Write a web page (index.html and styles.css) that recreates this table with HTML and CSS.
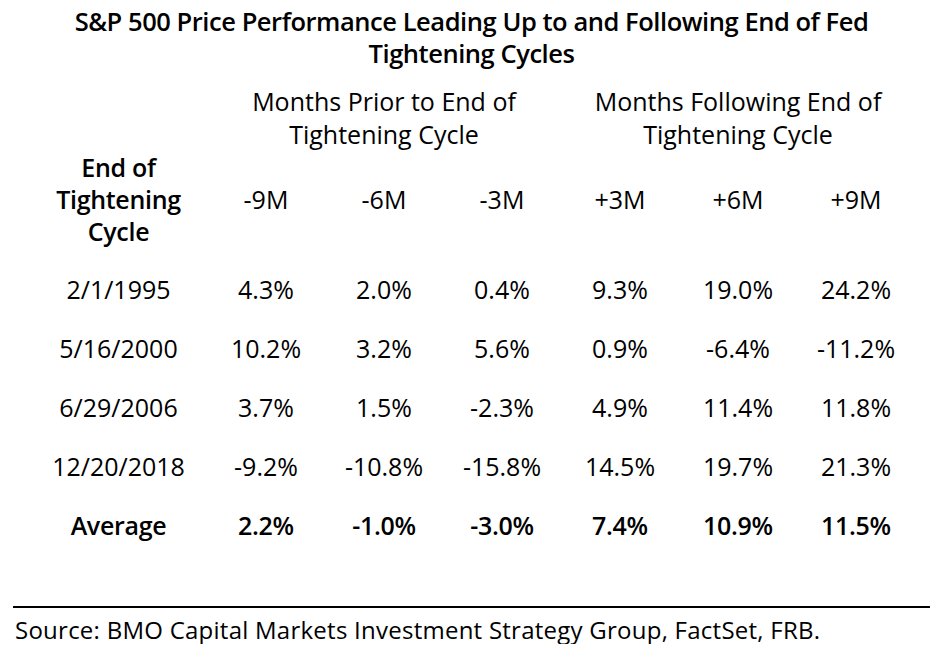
FILE: index.html
```html
<!DOCTYPE html>
<html lang="en">
<head>
<meta charset="utf-8">
<title>S&amp;P 500 Price Performance</title>
<link rel="stylesheet" href="styles.css">
</head>
<body>
<main class="page">
  <h1 class="title">S&amp;P 500 Price Performance Leading Up to and Following End of Fed Tightening Cycles</h1>
  <div class="table">
    <div class="group-row">
      <div class="spacer"></div>
      <div class="group">Months Prior to End of<br>Tightening Cycle</div>
      <div class="group">Months Following End of<br>Tightening Cycle</div>
    </div>
    <div class="row head">
      <div class="cell first strong">End of<br>Tightening<br>Cycle</div>
      <div class="cell">-9M</div>
      <div class="cell">-6M</div>
      <div class="cell">-3M</div>
      <div class="cell">+3M</div>
      <div class="cell">+6M</div>
      <div class="cell">+9M</div>
    </div>
    <div class="body">
      <div class="row data">
        <div class="cell first">2/1/1995</div>
        <div class="cell">4.3%</div><div class="cell">2.0%</div><div class="cell">0.4%</div>
        <div class="cell">9.3%</div><div class="cell">19.0%</div><div class="cell">24.2%</div>
      </div>
      <div class="row data">
        <div class="cell first">5/16/2000</div>
        <div class="cell">10.2%</div><div class="cell">3.2%</div><div class="cell">5.6%</div>
        <div class="cell">0.9%</div><div class="cell">-6.4%</div><div class="cell">-11.2%</div>
      </div>
      <div class="row data">
        <div class="cell first">6/29/2006</div>
        <div class="cell">3.7%</div><div class="cell">1.5%</div><div class="cell">-2.3%</div>
        <div class="cell">4.9%</div><div class="cell">11.4%</div><div class="cell">11.8%</div>
      </div>
      <div class="row data">
        <div class="cell first">12/20/2018</div>
        <div class="cell">-9.2%</div><div class="cell">-10.8%</div><div class="cell">-15.8%</div>
        <div class="cell">14.5%</div><div class="cell">19.7%</div><div class="cell">21.3%</div>
      </div>
      <div class="row data avg">
        <div class="cell first">Average</div>
        <div class="cell">2.2%</div><div class="cell">-1.0%</div><div class="cell">-3.0%</div>
        <div class="cell">7.4%</div><div class="cell">10.9%</div><div class="cell">11.5%</div>
      </div>
    </div>
  </div>
  <footer class="source">Source: BMO Capital Markets Investment Strategy Group, FactSet, FRB.</footer>
</main>
</body>
</html>
```

FILE: styles.css
```css
html, body {
  margin: 0;
  padding: 0;
  background: #ffffff;
}

body {
  font-family: "Open Sans", "Noto Sans", sans-serif;
  color: #000000;
}

.page {
  width: 917px;
  margin-left: 13px;
  padding-top: 5px;
}

.title {
  margin: 0 auto;
  max-width: 860px;
  font-size: 25.5px;
  line-height: 32px;
  font-weight: 600;
  letter-spacing: -0.45px;
  text-align: center;
}

.table {
  padding-left: 17px;
  margin-top: 16px;
}

.group-row {
  display: grid;
  grid-template-columns: 177px 354px 354px;
}

.group {
  font-size: 25px;
  line-height: 33px;
  text-align: center;
}

.row {
  display: grid;
  grid-template-columns: 177px repeat(6, 118px);
  align-items: center;
}

.cell {
  text-align: center;
  font-size: 25px;
  white-space: nowrap;
}

.head .cell {
  line-height: 32px;
}

.strong {
  font-weight: 600;
  letter-spacing: -0.3px;
}

.body {
  padding-top: 13px;
}

.data .cell {
  line-height: 59px;
}

.avg .cell {
  font-weight: 600;
  letter-spacing: -0.3px;
}

.source {
  margin-top: 51px;
  border-top: 2px solid #000000;
  padding-top: 8px;
  font-size: 24px;
  letter-spacing: 0.25px;
  line-height: 28px;
  padding-left: 2px;
}
```
